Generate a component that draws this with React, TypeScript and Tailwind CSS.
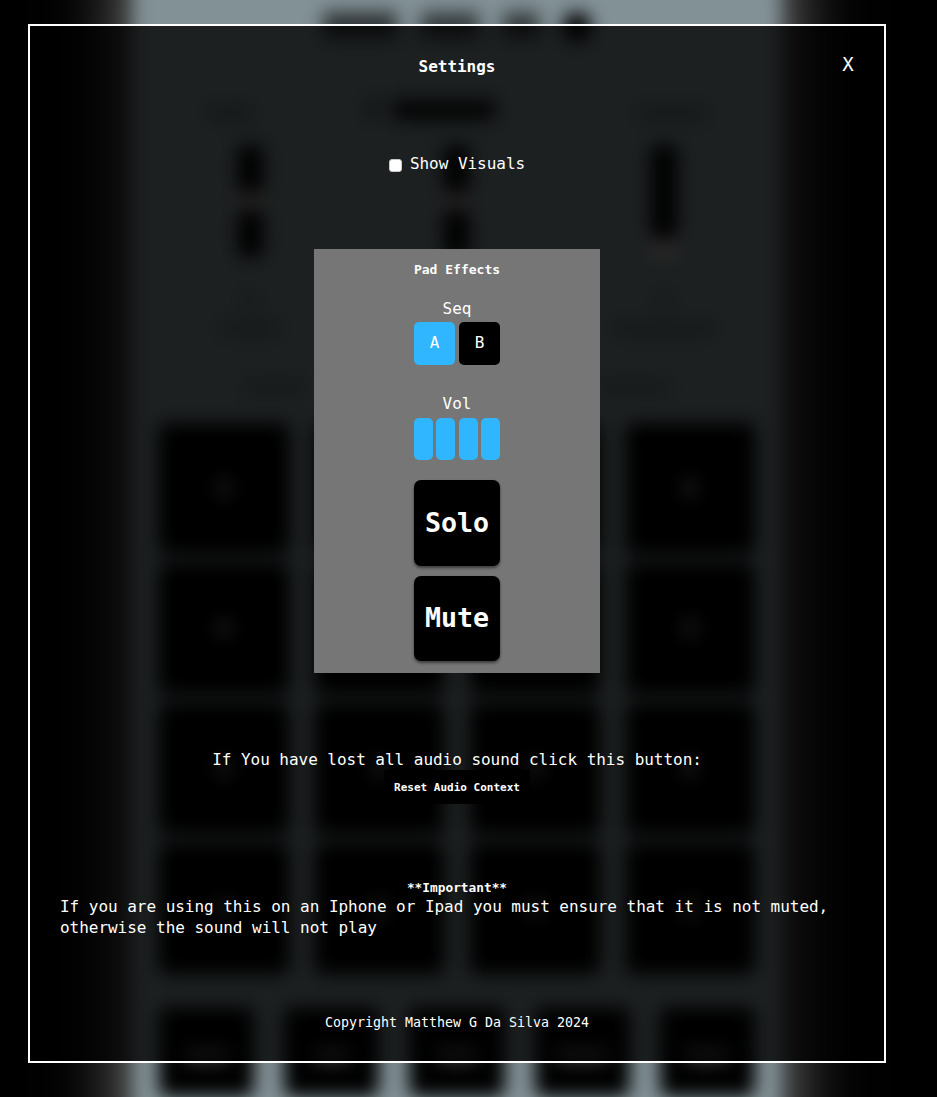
import { useState } from "react";

const PAD_LABELS = ["1", "2", "3", "4", "5", "6", "7", "8", "9", "10", "11", "12", "13", "14", "15", "16"];
const TRANSPORT = ["w-11", "w-9", "w-10", "w-[52px]", "w-11"];

function Slider({ split }: { split: boolean }) {
  if (!split) {
    return (
      <div className="flex h-[114px] w-[26px] flex-col">
        <div className="h-[94px] rounded-md bg-black" />
        <div className="h-[18px] bg-[#c4b8b4]" />
      </div>
    );
  }
  return (
    <div className="flex h-[112px] w-[25px] flex-col">
      <div className="h-[47px] rounded-md bg-black" />
      <div className="h-[18px] bg-[#a39c98]" />
      <div className="h-[47px] rounded-md bg-black" />
    </div>
  );
}

function Sampler() {
  return (
    <div
      aria-hidden="true"
      className="ml-[133px] flex h-[1240px] w-[648px] flex-col bg-[#829196] px-[26px] pt-[60px] shadow-[0_0_72px_rgba(255,255,255,0.6)]"
    >
      <div className="flex h-[99px] items-start justify-center gap-[24px] pt-[12px]">
        <div className="h-[26px] w-[74px] bg-black/65" />
        <div className="h-[26px] w-[58px] bg-black/60" />
        <div className="h-[26px] w-[36px] bg-black/60" />
        <div className="h-[30px] w-[28px] rounded-full bg-black" />
      </div>
      <div className="flex h-[46px] items-start pl-[49px] pt-[1px]">
        <div className="mt-[6px] h-[14px] w-[44px] bg-black/25" />
        <div className="ml-[116px] h-[18px] w-[10px] bg-black/60" />
        <div className="ml-[15px] h-[20px] w-[102px] bg-black/90" />
        <div className="mt-[6px] ml-[143px] h-[14px] w-[68px] bg-black/25" />
      </div>
      <div className="grid h-[148px] grid-cols-[182px_231px_183px] justify-items-center">
        <Slider split />
        <Slider split />
        <Slider split={false} />
      </div>
      <div className="flex h-[81px] items-start justify-between pr-[41px] pl-[61px]">
        <div className="flex w-[60px] flex-col items-center gap-[14px]">
          <div className="h-[14px] w-[18px] bg-black/20" />
          <div className="h-[15px] w-full bg-black/20" />
        </div>
        <div className="flex w-[100px] flex-col items-center gap-[14px]">
          <div className="h-[14px] w-[16px] bg-black/20" />
          <div className="h-[15px] w-full bg-black/20" />
        </div>
      </div>
      <div className="flex h-[49px] items-start justify-between px-[86px] pt-[6px]">
        <div className="h-[14px] w-[60px] bg-black/20" />
        <div className="h-[14px] w-[70px] bg-black/20" />
      </div>
      <div className="grid grid-cols-4 gap-x-[26px] gap-y-[10px]">
        {PAD_LABELS.map((label) => (
          <div
            key={label}
            className="flex h-[130px] items-center justify-center rounded-lg bg-black shadow-[0_3px_5px_rgba(0,0,0,0.5)]"
          >
            <div className="h-[20px] w-[16px] bg-white/35" />
          </div>
        ))}
      </div>
      <div className="mt-[34px] grid grid-cols-5 gap-x-[30px]">
        {TRANSPORT.map((width, index) => (
          <div key={index} className="flex h-[90px] items-center justify-center rounded-lg bg-black pt-1">
            <div className={`h-[14px] bg-white/30 ${width}`} />
          </div>
        ))}
      </div>
    </div>
  );
}

export default function App() {
  const [visuals, setVisuals] = useState(false);
  const [sequence, setSequence] = useState("A");

  return (
    <div
      className="relative h-[1097px] w-full overflow-hidden bg-black text-base leading-5 text-white"
      style={{ fontFamily: '"DejaVu Sans Mono", "Liberation Mono", monospace' }}
    >
      <div className="absolute inset-x-0 -top-[60px] blur-[9px]">
        <Sampler />
      </div>

      <section
        role="dialog"
        className="absolute top-[24px] left-[28px] flex h-[1039px] w-[858px] flex-col items-center border-2 border-white bg-black/78 px-[30px] pt-[31px]"
      >
        <button
          aria-label="Close"
          className="absolute top-[26px] right-[29px] h-6 w-[14px] text-[19px] leading-6"
        >
          X
        </button>
        <h2 className="font-bold tracking-[-0.03px]">Settings</h2>

        <label className="mt-[77px] flex h-5 items-center tracking-[-0.03px]">
          <input
            type="checkbox"
            checked={visuals}
            onChange={() => setVisuals(!visuals)}
            className="mt-[2px] mr-[8px] size-[13px] appearance-none rounded-[3px] border border-[#c8c8c8] bg-white checked:bg-[#30b5ff]"
          />
          Show Visuals
        </label>

        <div className="mt-[75px] flex h-[424px] w-[286px] shrink-0 flex-col items-center bg-[#767676] pt-[11px]">
          <h3 className="text-[13px] leading-5 font-bold">Pad Effects</h3>
          <span className="mt-[19px]">Seq</span>
          <div className="mt-[3px] flex gap-1">
            {["A", "B"].map((name) => (
              <button
                key={name}
                onClick={() => setSequence(name)}
                className={`h-[43px] w-[41px] rounded-[5px] pb-[2px] ${sequence === name ? "bg-[#30b5ff]" : "bg-black"}`}
              >
                {name}
              </button>
            ))}
          </div>
          <span className="mt-[29px]">Vol</span>
          <div className="mt-1 flex w-[86px] justify-between">
            {[1, 2, 3, 4].map((level) => (
              <button key={level} aria-label={`Volume ${level}`} className="h-[42px] w-[19px] rounded-[5px] bg-[#30b5ff]" />
            ))}
          </div>
          <button className="mt-5 h-[86px] w-[86px] rounded-[7px] bg-black text-[26.67px] font-bold shadow-[0_2px_3px_rgba(0,0,0,0.5)]">
            Solo
          </button>
          <button className="mt-[10px] h-[85px] w-[86px] rounded-[7px] bg-black pb-[2px] text-[26.67px] font-bold shadow-[0_2px_3px_rgba(0,0,0,0.5)]">
            Mute
          </button>
        </div>

        <p className="mt-[77px] tracking-[-0.03px]">If You have lost all audio sound click this button:</p>
        <button className="h-[34px] w-[146px] shrink-0 bg-black pt-[2px] text-[11px] font-bold whitespace-nowrap">
          Reset Audio Context
        </button>

        <h3 className="mt-[75px] text-[12.8px] leading-[18px] font-bold">**Important**</h3>
        <p className="-mt-px w-full leading-[21px] tracking-[-0.03px]">
          If you are using this on an Iphone or Ipad you must ensure that it is not muted, otherwise the sound will not
          play
        </p>
        <footer className="mt-[75px] text-[13.3px]">Copyright Matthew G Da Silva 2024</footer>
      </section>
    </div>
  );
}
